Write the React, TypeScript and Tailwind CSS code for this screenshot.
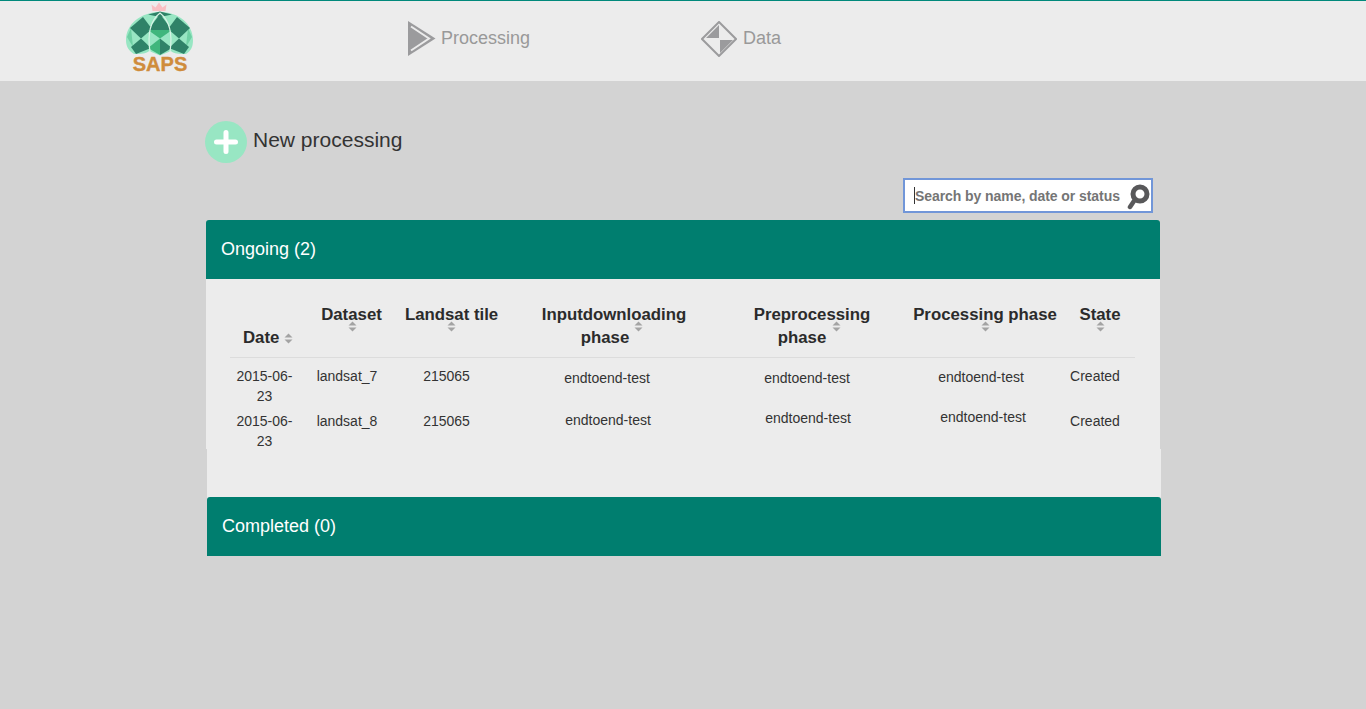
const SortIcon = ({ className }: { className: string }) => (
  <svg className={`absolute ${className}`} width="9" height="11" viewBox="0 0 9 11">
    <path d="M4.5 0.5 L8.5 4.5 H0.5 Z M0.5 6.5 H8.5 L4.5 10.5 Z" fill="#a3a3a3" />
  </svg>
);

const Logo = () => (
  <svg className="shrink-0" width="80" height="55" viewBox="120 1 80 55">
    {/* crown */}
    <path d="M152.500 11 L151.500 4.500 L155.500 7.500 L159 2.500 L162.500 7.500 L166.500 4.500 L165.500 11 Z" fill="#f9bfc3" />
    {/* dome */}
    <path d="M126 40 C126 24 141 12 160 12 C179 12 193 24 193 40 C193 47 191 51 186 54 C178 54.500 173 53 171 51 L160 55.500 L149 51 C147 53 142 54.500 134 54 C129 51 126 47 126 40 Z" fill="#98e6c3" />
    <path d="M148 14.500 L160 11.500 L172 14.500 L160 17 Z" fill="#2f8268" />
    {/* side shading */}
    <path d="M127 37 L131 28 L133 47 Z" fill="#6fd0a4" />
    <path d="M192 37 L188 28 L186 47 Z" fill="#6fd0a4" />
    {/* upper row */}
    <path d="M143 17 L152 29 L141 38.500 L130 28 Z" fill="#2f8268" />
    <path d="M177 17 L168 29 L179 38.500 L190 28 Z" fill="#2f8268" />
    <path d="M160 14 L172 30 H148 Z" fill="#2f8268" />
    <path d="M148 30 H172 L160 38.500 Z" fill="#3fb67c" />
    {/* lower row */}
    <path d="M141 38.500 L151 48 L136 54 L131 47 Z" fill="#2f8268" />
    <path d="M179 38.500 L169 48 L184 54 L189 47 Z" fill="#2f8268" />
    <path d="M160 38.500 L148 48 L160 55 Z" fill="#3fb67c" />
    <path d="M160 38.500 L172 48 L160 55 Z" fill="#2f8268" />
    {/* ribs */}
    <path d="M150 52 C147 32 151 20 160 13 C169 20 173 32 170 52" fill="none" stroke="#d9f3e6" strokeWidth="1.200" />
  </svg>
);

const ProcessingIcon = () => (
  <svg className="shrink-0" width="28" height="36" viewBox="408 21 28 36">
    <path d="M408 21 L435.500 38.500 L408 56 Z" fill="#9b9b9d" />
    <path d="M411 26.500 L429 38.500 L411 50.500" fill="none" stroke="#ececec" strokeWidth="2" />
  </svg>
);

const DataIcon = () => (
  <svg className="shrink-0" width="36" height="36" viewBox="701 21 36 36">
    <path d="M719 22 L736 39 L719 56 L702 39 Z" fill="#ececec" stroke="#9b9b9d" strokeWidth="2" />
    <path d="M719 25 V38 H706 Z M720 40 H733 L720 53 Z" fill="#9b9b9d" />
  </svg>
);

const SearchIcon = () => (
  <svg className="shrink-0" width="24" height="28" viewBox="0 0 24 28">
    <circle cx="14" cy="12" r="7" fill="none" stroke="#58585a" strokeWidth="5" />
    <path d="M8 19 L4 25" stroke="#58585a" strokeWidth="4.500" strokeLinecap="round" />
  </svg>
);

const thBase = "relative pt-6 pb-2 align-top text-center font-bold text-[16.8px] leading-[23px] text-[#2b2b2b]";
const td = "align-top text-center text-[14px] leading-5 text-[#333333]";
const row1 = `${td} pt-2`;
const row2 = `${td} pt-[5px]`;

export default function App() {
  return (
    <div className="min-h-[709px] bg-[#d3d3d3] font-['Liberation_Sans',Arial,sans-serif]">
      {/* Top bar */}
      <header className="flex h-[81px] items-center border-t border-[#00897b] bg-[#ececec]">
        <div className="ml-[120px] flex w-[80px] flex-col items-center self-start">
          <Logo />
          <span className="text-[20px] font-bold leading-[16px] text-[#cf8c3c] [-webkit-text-stroke:0.4px_#cf8c3c]">SAPS</span>
        </div>
        <div className="ml-[208px] mb-[4px] flex items-center gap-[5px]">
          <ProcessingIcon />
          <span className="mb-[2px] text-[18px] text-[#999999]">Processing</span>
        </div>
        <div className="ml-[171px] mb-[4px] flex items-center gap-[6px]">
          <DataIcon />
          <span className="mb-[2px] text-[18px] text-[#999999]">Data</span>
        </div>
      </header>

      <main className="pl-[205px]">
        <button className="mt-[40px] flex items-center gap-[6px]">
          <span className="flex h-[42px] w-[42px] items-center justify-center rounded-full bg-[#98e6c3]">
            <svg width="24" height="24" viewBox="0 0 24 24">
              <path d="M12 2.500 V21.500 M2.500 12 H21.500" stroke="#ffffff" strokeWidth="5" strokeLinecap="round" />
            </svg>
          </span>
          <span className="mb-1 text-[21px] leading-6 text-[#333333]">New processing</span>
        </button>

        {/* Search */}
        <div className="ml-[698px] mt-[15px] flex h-[35px] w-[250px] items-center border-2 border-[#7196d8] bg-white pl-[9px] pr-px">
          <span className="h-[17px] w-px shrink-0 bg-[#333333]"></span>
          <input
            placeholder="Search by name, date or status"
            className="min-w-0 flex-1 bg-transparent pt-[2px] text-[14px] font-bold tracking-[-0.07px] text-[#757575] placeholder:text-[#757575] outline-none"
          />
          <SearchIcon />
        </div>

        {/* Ongoing */}
        <section className="ml-px mt-[7px] h-[229px] w-[954px]">
          <div className="flex h-[59px] items-center rounded-t-[3px] bg-[#007e6f] pl-[15px] text-[18px] text-white">Ongoing (2)</div>
          <div className="h-[170px] bg-[#ececec] px-[24px]">
            <table className="w-[905px] table-fixed border-collapse">
              <colgroup>
                <col className="w-[69px]" />
                <col className="w-[105px]" />
                <col className="w-[95px]" />
                <col className="w-[230px]" />
                <col className="w-[166px]" />
                <col className="w-[170px]" />
                <col className="w-[70px]" />
              </colgroup>
              <thead>
                <tr className="border-b border-[#dcdcdc]">
                  <th className={`${thBase} !align-bottom !text-left pl-[13px]`}>
                    Date
                    <SortIcon className="left-[54px] bottom-[13px]" />
                  </th>
                  <th className={thBase}>
                    Dataset
                    <SortIcon className="left-[49px] top-[42px]" />
                  </th>
                  <th className={`${thBase} whitespace-nowrap`}>
                    Landsat tile
                    <SortIcon className="left-[43px] top-[42px]" />
                  </th>
                  <th className={thBase}>
                    Inputdownloading
                    <span className="block pr-[18px]">phase</span>
                    <SortIcon className="left-[135px] top-[42px]" />
                  </th>
                  <th className={thBase}>
                    Preprocessing
                    <span className="block pr-[20px]">phase</span>
                    <SortIcon className="left-[103px] top-[42px]" />
                  </th>
                  <th className={`${thBase} whitespace-nowrap pl-[10px]`}>
                    Processing phase
                    <SortIcon className="left-[86px] top-[42px]" />
                  </th>
                  <th className={thBase}>
                    State
                    <SortIcon className="left-[31px] top-[42px]" />
                  </th>
                </tr>
              </thead>
              <tbody>
                <tr>
                  <td className={row1}>2015-06-23</td>
                  <td className={`${row1} pr-[9px]`}>landsat_7</td>
                  <td className={`${row1} pr-[10px]`}>215065</td>
                  <td className={`${td} pt-[10px] pr-[14px]`}>endtoend-test</td>
                  <td className={`${td} pt-[10px] pr-[10px]`}>endtoend-test</td>
                  <td className={`${td} pt-[9px] pl-[2px]`}>endtoend-test</td>
                  <td className={`${row1} pr-[10px]`}>Created</td>
                </tr>
                <tr>
                  <td className={row2}>2015-06-23</td>
                  <td className={`${row2} pr-[9px]`}>landsat_8</td>
                  <td className={`${row2} pr-[10px]`}>215065</td>
                  <td className={`${td} pt-[4px] pr-[12px]`}>endtoend-test</td>
                  <td className={`${td} pt-[2px] pr-[8px]`}>endtoend-test</td>
                  <td className={`${td} pt-[1px] pl-[6px]`}>endtoend-test</td>
                  <td className={`${row2} pr-[10px]`}>Created</td>
                </tr>
              </tbody>
            </table>
          </div>
        </section>

        {/* Completed */}
        <section className="ml-[2px] w-[954px] bg-[#ececec] pt-[48px]">
          <div className="flex h-[59px] items-center rounded-t-[3px] bg-[#007e6f] pl-[15px] text-[18px] text-white">Completed (0)</div>
        </section>
      </main>
    </div>
  );
}
